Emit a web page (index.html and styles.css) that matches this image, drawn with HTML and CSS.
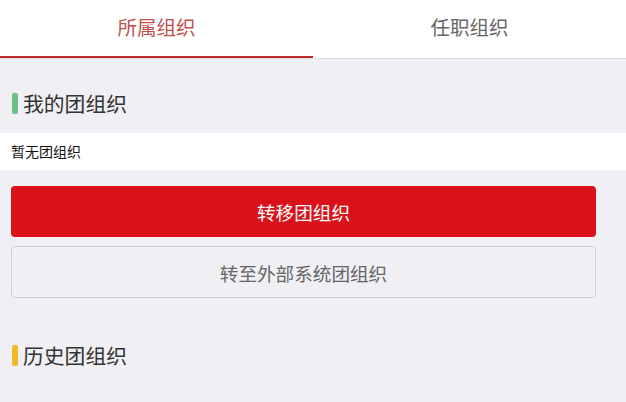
FILE: index.html
```html
<!DOCTYPE html>
<html>
<head>
  <meta charset="utf-8">
  <meta name="viewport" content="width=device-width">
  <title>团组织</title>
  <link rel="stylesheet" href="styles.css">
</head>
<body>
  <div class="tabs">
    <div class="tab active">所属组织</div>
    <div class="tab">任职组织</div>
  </div>

  <div class="section-title">
    <span class="bar green"></span>
    <span>我的团组织</span>
  </div>
  <div class="empty">暂无团组织</div>

  <div class="actions">
    <button class="btn btn-primary">转移团组织</button>
    <button class="btn btn-default">转至外部系统团组织</button>
  </div>

  <div class="section-title history">
    <span class="bar yellow"></span>
    <span>历史团组织</span>
  </div>
</body>
</html>
```

FILE: styles.css
```css
body {
  margin: 0;
  background: #efeff4;
  font-family: "Noto Sans CJK SC", "Noto Sans", sans-serif;
  color: #333;
}

.tabs {
  display: flex;
  background: #fff;
  border-bottom: 1px solid #dcdce0;
}

.tab {
  flex: 1;
  height: 56px;
  line-height: 54px;
  text-align: center;
  font-size: 19.5px;
  color: #666;
  border-bottom: 2px solid transparent;
}

.tab.active {
  color: #c0504d;
  border-bottom-color: #bf2a2e;
}

.section-title {
  display: flex;
  align-items: center;
  height: 28px;
  padding: 30px 12px 16px;
  font-size: 20.8px;
  color: #333;
}

.section-title .bar {
  width: 6px;
  height: 21px;
  margin-right: 5px;
  border-radius: 2px;
}

.bar.green {
  background: #6cbf88;
}

.bar.yellow {
  background: #f0b928;
}

.empty {
  height: 37px;
  line-height: 37px;
  padding-left: 11px;
  background: #fff;
  font-size: 14px;
  color: #111;
}

.actions {
  display: flex;
  flex-direction: column;
  gap: 9px;
  margin: 16px 30px 0 11px;
}

.btn {
  height: 51px;
  border-radius: 4px;
  font-family: inherit;
  font-size: 18.6px;
}

.btn-primary {
  background: #d9121a;
  border: none;
  color: #fff;
}

.btn-default {
  height: 52px;
  background: #efeff4;
  border: 1px solid #cfcfd4;
  color: #666;
}

.section-title.history {
  padding-top: 43px;
}
```
